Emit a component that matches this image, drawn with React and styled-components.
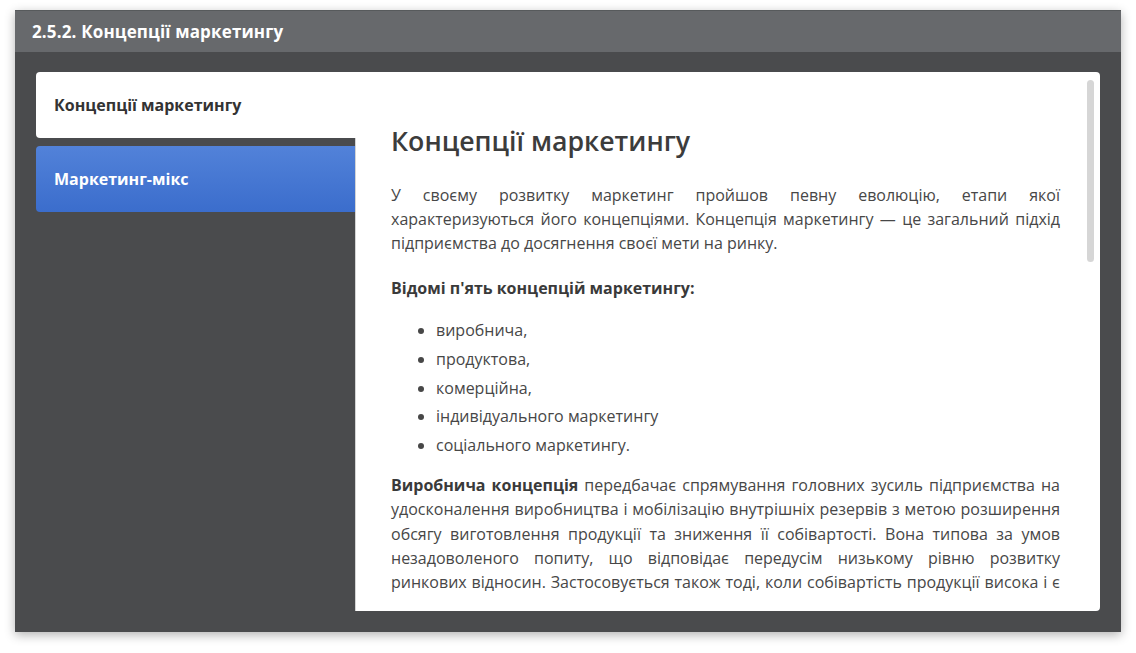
import React from "react";
import styled, { createGlobalStyle } from "styled-components";

const Global = createGlobalStyle`
  html, body { margin: 0; padding: 0; background: #ffffff; }
  body { font-family: "Open Sans", "Noto Sans", sans-serif; }
  * { box-sizing: border-box; }
`;

const Page = styled.div`
  padding: 10px 15px 0 15px;
  width: 1136px;
  height: 653px;
`;

const Frame = styled.div`
  width: 1106px;
  height: 622px;
  display: flex;
  flex-direction: column;
  box-shadow: 0 3px 10px rgba(0, 0, 0, 0.3);
`;

const Header = styled.div`
  height: 42px;
  flex: none;
  display: flex;
  align-items: center;
  padding-left: 17px;
  background: #67696c;
  border-top: 1px solid #575a5c;
  color: #ffffff;
  font-size: 17px;
  letter-spacing: 0.15px;
  font-weight: 700;
`;

const Body = styled.div`
  flex: 1;
  min-height: 0;
  display: flex;
  padding: 20px 21px 21px 21px;
  background: #4a4b4d;
`;

const Tabs = styled.div`
  width: 320px;
  flex: none;
  display: flex;
  flex-direction: column;
  gap: 8px;
  margin-right: -1px;
  position: relative;
  z-index: 1;
`;

const Tab = styled.div`
  height: 66px;
  display: flex;
  align-items: center;
  padding-left: 18px;
  border-radius: 4px 0 0 4px;
  font-size: 16px;
  font-weight: 700;
  color: ${(p) => (p.$active ? "#333333" : "#ffffff")};
  background: ${(p) =>
    p.$active ? "#ffffff" : "linear-gradient(180deg, #5282d9 0%, #3b6dcc 100%)"};
  margin-right: ${(p) => (p.$active ? "0" : "1px")};
`;

const Panel = styled.div`
  flex: 1;
  min-width: 0;
  position: relative;
  background: #ffffff;
  border-left: 1px solid #d4d4d4;
  border-radius: 0 4px 4px 0;
  padding-bottom: 18px;
  display: flex;
`;

const Scroller = styled.div`
  flex: 1;
  overflow: hidden;
  padding: 0 40px 0 35px;
  color: #474747;
  font-size: 16px;
  line-height: 24px;
`;

const Thumb = styled.div`
  position: absolute;
  top: 8px;
  right: 6px;
  width: 7px;
  height: 182px;
  border-radius: 4px;
  background: #d6d6d6;
`;

const Title = styled.h2`
  margin: 53px 0 26px;
  font-size: 26.7px;
  line-height: 32px;
  font-weight: 600;
  color: #3c3c3c;
`;

const Para = styled.p`
  margin: 0 0 21px;
  text-align: justify;
  line-height: ${(p) => (p.$loose ? "24.3px" : "24px")};
`;

const Lead = styled.p`
  margin: 0 0 18px;
  font-weight: 700;
  color: #3a3a3a;
`;

const List = styled.ul`
  margin: 0 0 16px;
  padding-left: 45px;
  li + li { margin-top: 4.75px; }
`;

const Strong = styled.b`
  font-weight: 700;
  color: #3a3a3a;
`;

export default function App() {
  return (
    <Page>
      <Global />
      <Frame>
        <Header>2.5.2. Концепції маркетингу</Header>
        <Body>
          <Tabs>
            <Tab $active>Концепції маркетингу</Tab>
            <Tab>Маркетинг-мікс</Tab>
          </Tabs>
          <Panel>
            <Scroller>
              <Title>Концепції маркетингу</Title>
              <Para>
                У своєму розвитку маркетинг пройшов певну еволюцію, етапи якої
                характеризуються його концепціями. Концепція маркетингу — це
                загальний підхід підприємства до досягнення своєї мети на ринку.
              </Para>
              <Lead>Відомі п'ять концепцій маркетингу:</Lead>
              <List>
                <li>виробнича,</li>
                <li>продуктова,</li>
                <li>комерційна,</li>
                <li>індивідуального маркетингу</li>
                <li>соціального маркетингу.</li>
              </List>
              <Para $loose>
                <Strong>Виробнича концепція</Strong> передбачає спрямування
                головних зусиль підприємства на удосконалення виробництва і
                мобілізацію внутрішніх резервів з метою розширення обсягу
                виготовлення продукції та зниження її собівартості. Вона типова
                за умов незадоволеного попиту, що відповідає передусім низькому
                рівню розвитку ринкових відносин. Застосовується також тоді,
                коли собівартість продукції висока і є потреба її зниження для
                розширення ринку збуту.
              </Para>
            </Scroller>
            <Thumb />
          </Panel>
        </Body>
      </Frame>
    </Page>
  );
}
